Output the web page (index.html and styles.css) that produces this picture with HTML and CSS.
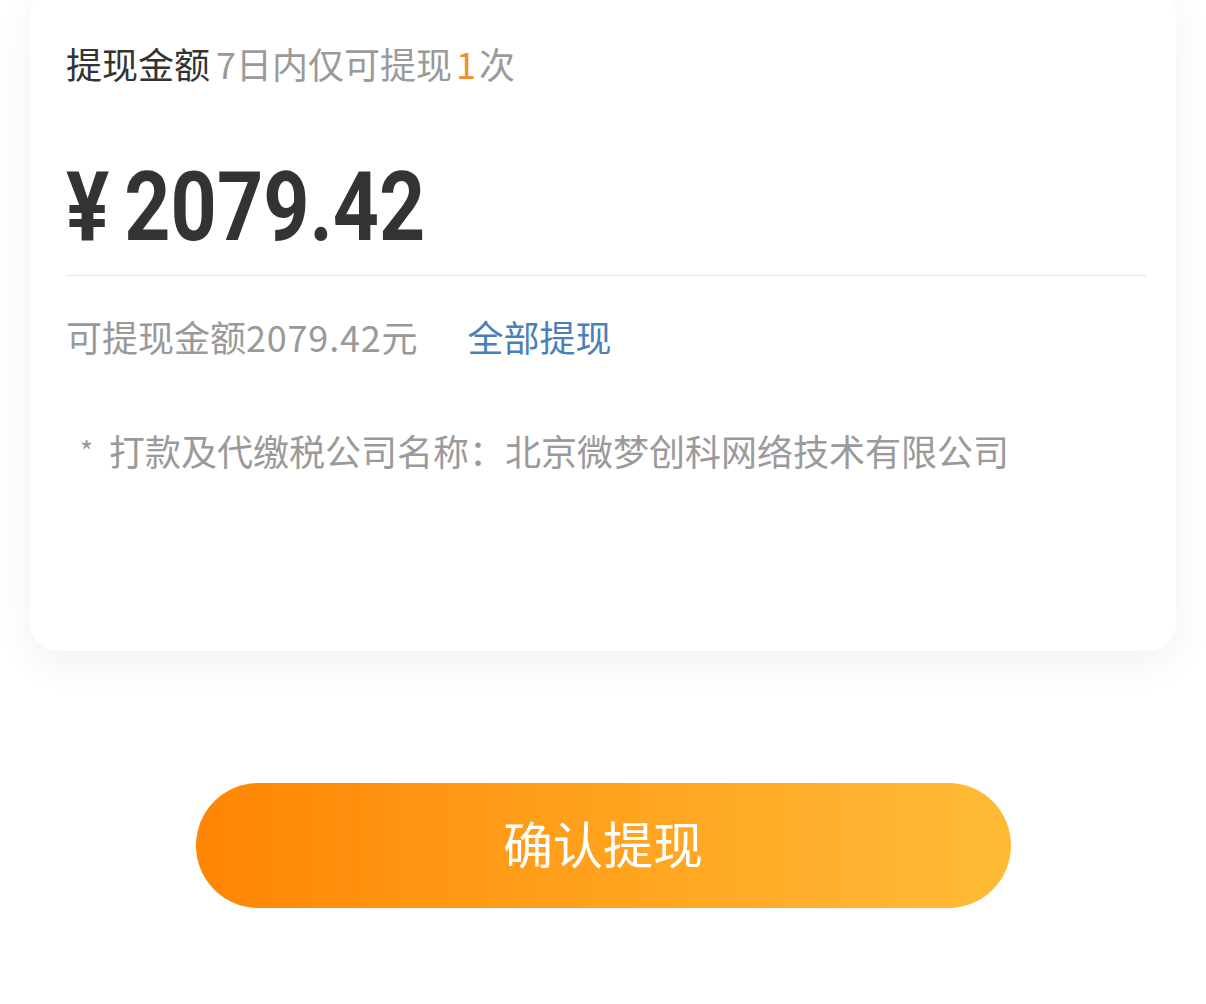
FILE: index.html
```html
<!DOCTYPE html>
<html lang="zh-CN">
<head>
<meta charset="utf-8">
<title>提现</title>
<link rel="stylesheet" href="styles.css">
</head>
<body>
<div class="page">
  <section class="card">
    <div class="title"><span class="title-main">提现金额</span><span class="title-sub">7日内仅可提现<span class="hl">1</span>次</span></div>
    <div class="amount"><span class="amount-inner"><span class="yen">¥</span><span class="num">2079.42</span></span></div>
    <div class="divider"></div>
    <div class="avail"><span class="avail-text">可提现金额<span class="digits">2079.42</span>元</span><span class="all">全部提现</span></div>
    <div class="note"><span class="star">*</span>打款及代缴税公司名称：北京微梦创科网络技术有限公司</div>
  </section>
  <div class="btn-wrap">
    <div class="btn">确认提现</div>
  </div>
</div>
</body>
</html>
```

FILE: styles.css
```css
html, body {
  margin: 0;
  padding: 0;
  background: #ffffff;
}
body {
  font-family: "Noto Sans CJK SC", "Noto Sans", sans-serif;
  width: 1206px;
  height: 1004px;
  overflow: hidden;
}
.page {
  display: flex;
  flex-direction: column;
}
.card {
  margin: -12px 30px 0 30px;
  padding: 50px 30px 176px 36px;
  background: #fff;
  border-radius: 28px;
  box-shadow: 0 12px 40px rgba(0, 0, 0, 0.06);
}
.title {
  font-size: 36px;
  line-height: 50px;
  height: 50px;
  display: flex;
  align-items: baseline;
}
.title-main {
  color: #333333;
}
.title-sub {
  color: #9a9a9a;
  margin-left: 6px;
}
.hl {
  color: #f0902a;
  margin: 0 3px 0 4px;
}
.amount {
  margin-top: 72px;
  height: 95px;
  line-height: 95px;
  color: #333333;
  font-family: Roboto, "Liberation Sans", sans-serif;
  font-weight: bold;
  font-size: 96px;
}
.amount-inner {
  display: inline-block;
  white-space: nowrap;
  transform: scaleX(0.84);
  transform-origin: left center;
}
.yen {
  margin-right: 18px;
}
.divider {
  margin-top: 20px;
  height: 1px;
  background: #e6e6e6;
}
.avail {
  margin-top: 35px;
  font-size: 36px;
  line-height: 50px;
  height: 50px;
  display: flex;
}
.avail-text {
  color: #999999;
}
.digits {
  letter-spacing: 0.8px;
}
.all {
  color: #4a7fb8;
  margin-left: 50px;
}
.note {
  margin-top: 64px;
  font-size: 36px;
  line-height: 50px;
  color: #9a9a9a;
  display: flex;
}
.star {
  font-size: 28px;
  margin-left: 14px;
  margin-right: 16px;
}
.btn-wrap {
  display: flex;
  justify-content: center;
  margin-top: 132px;
}
.btn {
  width: 815px;
  height: 125px;
  border-radius: 63px;
  background: linear-gradient(90deg, #ff8504 0%, #ff9a15 35%, #ffb22e 80%, #ffbb34 100%);
  color: #ffffff;
  font-size: 50px;
  line-height: 119px;
  text-align: center;
}
```
